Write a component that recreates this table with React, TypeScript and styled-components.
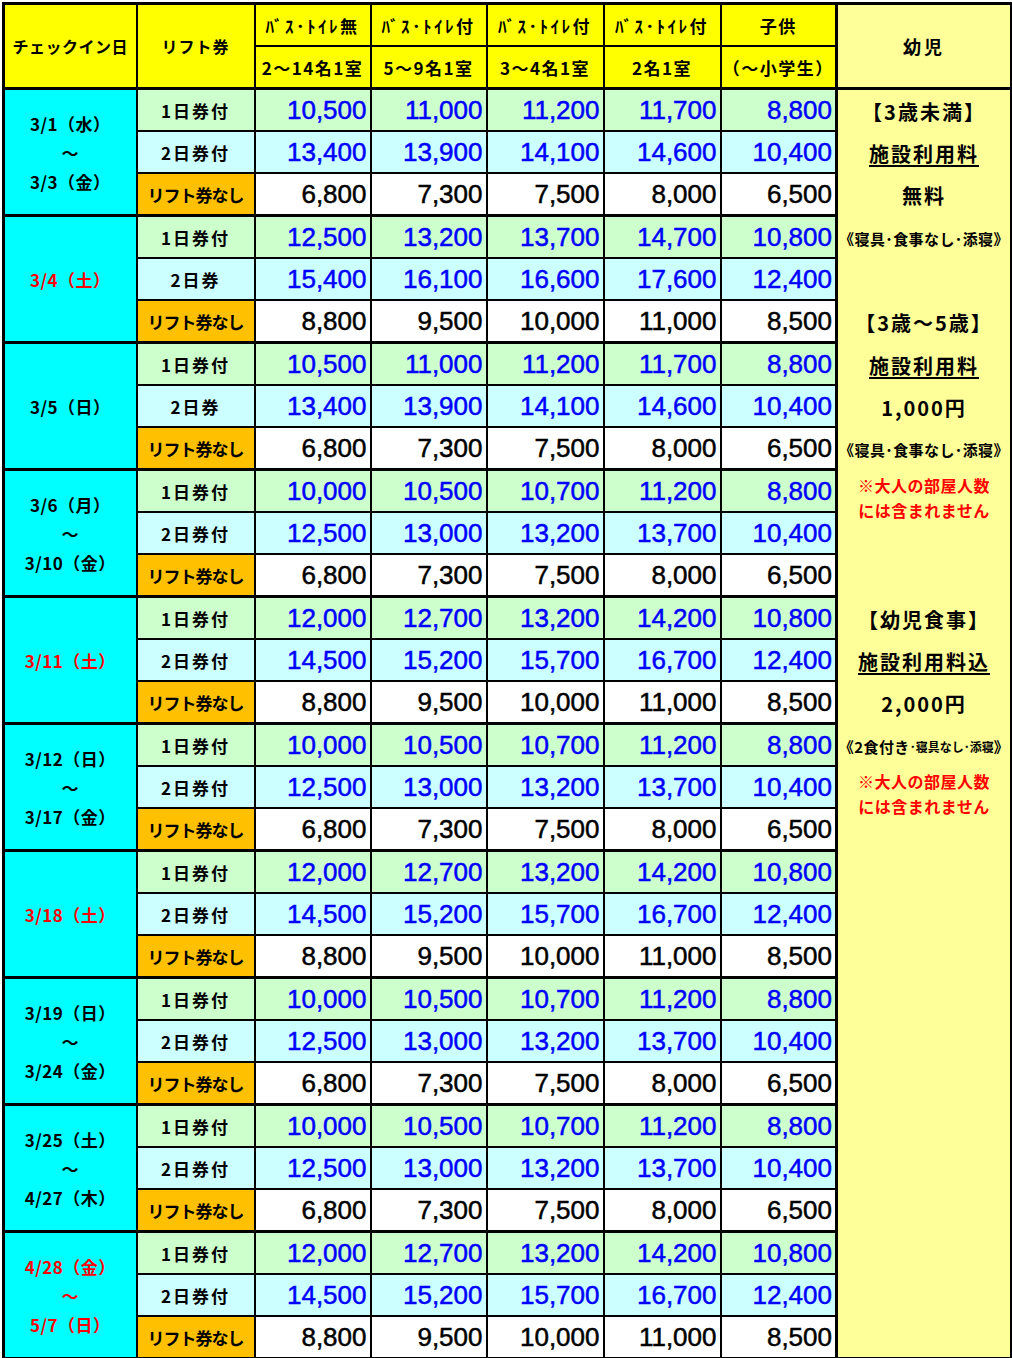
import React from 'react';
import styled, { createGlobalStyle } from 'styled-components';

const GlobalStyle = createGlobalStyle`
  body {
    margin: 0;
    background: #fff;
  }
`;

const Page = styled.div`
  padding: 2px 0 0 2px;
`;

const Table = styled.table`
  border-collapse: collapse;
  table-layout: fixed;
  width: 1008px;
  border: 3px solid #000;
  font-family: 'Noto Sans CJK JP', sans-serif;
  color: #000;
`;

const Cell = styled.td<{ $last?: boolean }>`
  border: 2px solid #000;
  border-bottom-width: ${(p) => (p.$last ? '3px' : '2px')};
  padding: 0;
  text-align: center;
  vertical-align: middle;
  font-weight: 700;
  white-space: nowrap;
  overflow: hidden;
`;

const HeadCell = styled.th<{ $bottom?: boolean; $spacing?: number }>`
  border: 2px solid #000;
  border-bottom-width: ${(p) => (p.$bottom ? '3px' : '2px')};
  background: #ffff00;
  padding: 0;
  height: 40px;
  font-size: 17px;
  font-weight: 700;
  white-space: nowrap;
  letter-spacing: ${(p) => p.$spacing ?? 1.5}px;
`;

const LeadHead = styled(HeadCell)`
  font-size: 16px;
`;

const InfantHead = styled(HeadCell)`
  background: #ffff99;
  border-left-width: 3px;
  font-size: 18px;
  letter-spacing: 3px;
`;

const DateCell = styled(Cell)<{ $red?: boolean }>`
  background: #00ffff;
  color: ${(p) => (p.$red ? '#ff0000' : '#000')};
  font-size: 17px;
  line-height: 29px;
  letter-spacing: 0.5px;
`;

type RowKind = 'one' | 'two' | 'none';

const rowBg: Record<RowKind, string> = {
  one: '#ccffcc',
  two: '#ccffff',
  none: '#ffffff',
};

const LiftCell = styled(Cell)<{ $kind: RowKind }>`
  background: ${(p) => (p.$kind === 'none' ? '#ffc000' : rowBg[p.$kind])};
  font-size: 17px;
  height: 40px;
  letter-spacing: ${(p) => (p.$kind === 'none' ? '-1px' : '2px')};
`;

const PriceCell = styled(Cell)<{ $kind: RowKind }>`
  background: ${(p) => rowBg[p.$kind]};
  color: ${(p) => (p.$kind === 'none' ? '#000' : '#0000ff')};
  text-align: right;
  padding-right: 3px;
  font-family: 'Liberation Sans', Arial, sans-serif;
  font-size: 26px;
  font-weight: 400;
  -webkit-text-stroke: 0.5px currentColor;
`;

const InfantCell = styled(Cell)`
  background: #ffff99;
  border-left-width: 3px;
  vertical-align: top;
`;

const InfoStack = styled.div`
  display: flex;
  flex-direction: column;
`;

const InfoLine = styled.div<{ $rows?: number; $small?: boolean; $underline?: boolean }>`
  height: ${(p) => (p.$rows ?? 1) * 42.33}px;
  display: flex;
  align-items: center;
  justify-content: center;
  font-size: ${(p) => (p.$small ? '15px' : '20px')};
  letter-spacing: ${(p) => (p.$small ? '0.4px' : '2px')};
  text-decoration: ${(p) => (p.$underline ? 'underline' : 'none')};
  text-decoration-thickness: 1.5px;
  text-underline-offset: 3px;
`;

const SmallPart = styled.span`
  font-size: 12px;
  letter-spacing: 0;
`;

const Note = styled.div<{ $rows: number }>`
  height: ${(p) => p.$rows * 42.33}px;
  padding-top: 2px;
  box-sizing: border-box;
  color: #ff0000;
  font-size: 16px;
  line-height: 25px;
  letter-spacing: 0.5px;
`;

interface Group {
  dates: string[];
  red?: boolean;
  twoLabel?: string;
  prices: [number[], number[], number[]];
}

const WEEK_A: Group['prices'] = [
  [10000, 10500, 10700, 11200, 8800],
  [12500, 13000, 13200, 13700, 10400],
  [6800, 7300, 7500, 8000, 6500],
];

const PEAK: Group['prices'] = [
  [12000, 12700, 13200, 14200, 10800],
  [14500, 15200, 15700, 16700, 12400],
  [8800, 9500, 10000, 11000, 8500],
];

const EARLY: Group['prices'] = [
  [10500, 11000, 11200, 11700, 8800],
  [13400, 13900, 14100, 14600, 10400],
  [6800, 7300, 7500, 8000, 6500],
];

const GROUPS: Group[] = [
  { dates: ['3/1（水）', '～', '3/3（金）'], prices: EARLY },
  {
    dates: ['3/4（土）'],
    red: true,
    twoLabel: '2日券',
    prices: [
      [12500, 13200, 13700, 14700, 10800],
      [15400, 16100, 16600, 17600, 12400],
      [8800, 9500, 10000, 11000, 8500],
    ],
  },
  { dates: ['3/5（日）'], twoLabel: '2日券', prices: EARLY },
  { dates: ['3/6（月）', '～', '3/10（金）'], prices: WEEK_A },
  { dates: ['3/11（土）'], red: true, prices: PEAK },
  { dates: ['3/12（日）', '～', '3/17（金）'], prices: WEEK_A },
  { dates: ['3/18（土）'], red: true, prices: PEAK },
  { dates: ['3/19（日）', '～', '3/24（金）'], prices: WEEK_A },
  { dates: ['3/25（土）', '～', '4/27（木）'], prices: WEEK_A },
  { dates: ['4/28（金）', '～', '5/7（日）'], red: true, prices: PEAK },
];

const ROOM_TYPES = ['ﾊﾞｽ･ﾄｲﾚ無', 'ﾊﾞｽ･ﾄｲﾚ付', 'ﾊﾞｽ･ﾄｲﾚ付', 'ﾊﾞｽ･ﾄｲﾚ付', '子供'];
const ROOM_SIZES = ['2～14名1室', '5～9名1室', '3～4名1室', '2名1室', '（～小学生）'];
const COL_WIDTHS = [133, 118, 116, 116, 117, 117, 116, 175];

const KINDS: RowKind[] = ['one', 'two', 'none'];

function formatYen(value: number) {
  return value.toLocaleString('en-US');
}

function InfantInfo() {
  return (
    <InfoStack>
      <InfoLine>【3歳未満】</InfoLine>
      <InfoLine $underline>施設利用料</InfoLine>
      <InfoLine>無料</InfoLine>
      <InfoLine $small>《寝具･食事なし･添寝》</InfoLine>
      <InfoLine />
      <InfoLine>【3歳～5歳】</InfoLine>
      <InfoLine $underline>施設利用料</InfoLine>
      <InfoLine>1,000円</InfoLine>
      <InfoLine $small>《寝具･食事なし･添寝》</InfoLine>
      <Note $rows={2}>
        ※大人の部屋人数
        <br />
        には含まれません
      </Note>
      <InfoLine />
      <InfoLine>【幼児食事】</InfoLine>
      <InfoLine $underline>施設利用料込</InfoLine>
      <InfoLine>2,000円</InfoLine>
      <InfoLine $small>
        《2食付き<SmallPart>･寝具なし･添寝</SmallPart>》
      </InfoLine>
      <Note $rows={2}>
        ※大人の部屋人数
        <br />
        には含まれません
      </Note>
    </InfoStack>
  );
}

const App: React.FC = () => {
  const totalRows = GROUPS.length * 3;

  function handleRenderGroups() {
    return GROUPS.map((group, gi) =>
      KINDS.map((kind, ri) => {
        const last = ri === 2;
        const label =
          kind === 'one' ? '1日券付' : kind === 'two' ? group.twoLabel ?? '2日券付' : 'リフト券なし';
        return (
          <tr key={`row_${gi}_${ri}`}>
            {ri === 0 && (
              <DateCell rowSpan={3} $red={group.red} $last>
                {group.dates.map((d, di) => (
                  <div key={`date_${di}`}>{d}</div>
                ))}
              </DateCell>
            )}
            <LiftCell $kind={kind} $last={last}>
              {label}
            </LiftCell>
            {group.prices[ri].map((price, pi) => (
              <PriceCell key={`price_${pi}`} $kind={kind} $last={last}>
                {formatYen(price)}
              </PriceCell>
            ))}
            {gi === 0 && ri === 0 && (
              <InfantCell rowSpan={totalRows}>
                <InfantInfo />
              </InfantCell>
            )}
          </tr>
        );
      })
    );
  }

  return (
    <>
      <GlobalStyle />
      <Page>
        <Table>
          <colgroup>
            {COL_WIDTHS.map((w, i) => (
              <col key={`col_${i}`} style={{ width: w }} />
            ))}
          </colgroup>
          <thead>
            <tr>
              <LeadHead rowSpan={2} $bottom $spacing={0.5}>
                チェックイン日
              </LeadHead>
              <LeadHead rowSpan={2} $bottom $spacing={1}>
                リフト券
              </LeadHead>
              {ROOM_TYPES.map((t, i) => (
                <HeadCell key={`type_${i}`} $spacing={i < 4 ? 2.5 : 1.5}>
                  {t}
                </HeadCell>
              ))}
              <InfantHead rowSpan={2} $bottom>
                幼児
              </InfantHead>
            </tr>
            <tr>
              {ROOM_SIZES.map((s, i) => (
                <HeadCell key={`size_${i}`} $bottom>
                  {s}
                </HeadCell>
              ))}
            </tr>
          </thead>
          <tbody>{handleRenderGroups()}</tbody>
        </Table>
      </Page>
    </>
  );
};

export default App;
